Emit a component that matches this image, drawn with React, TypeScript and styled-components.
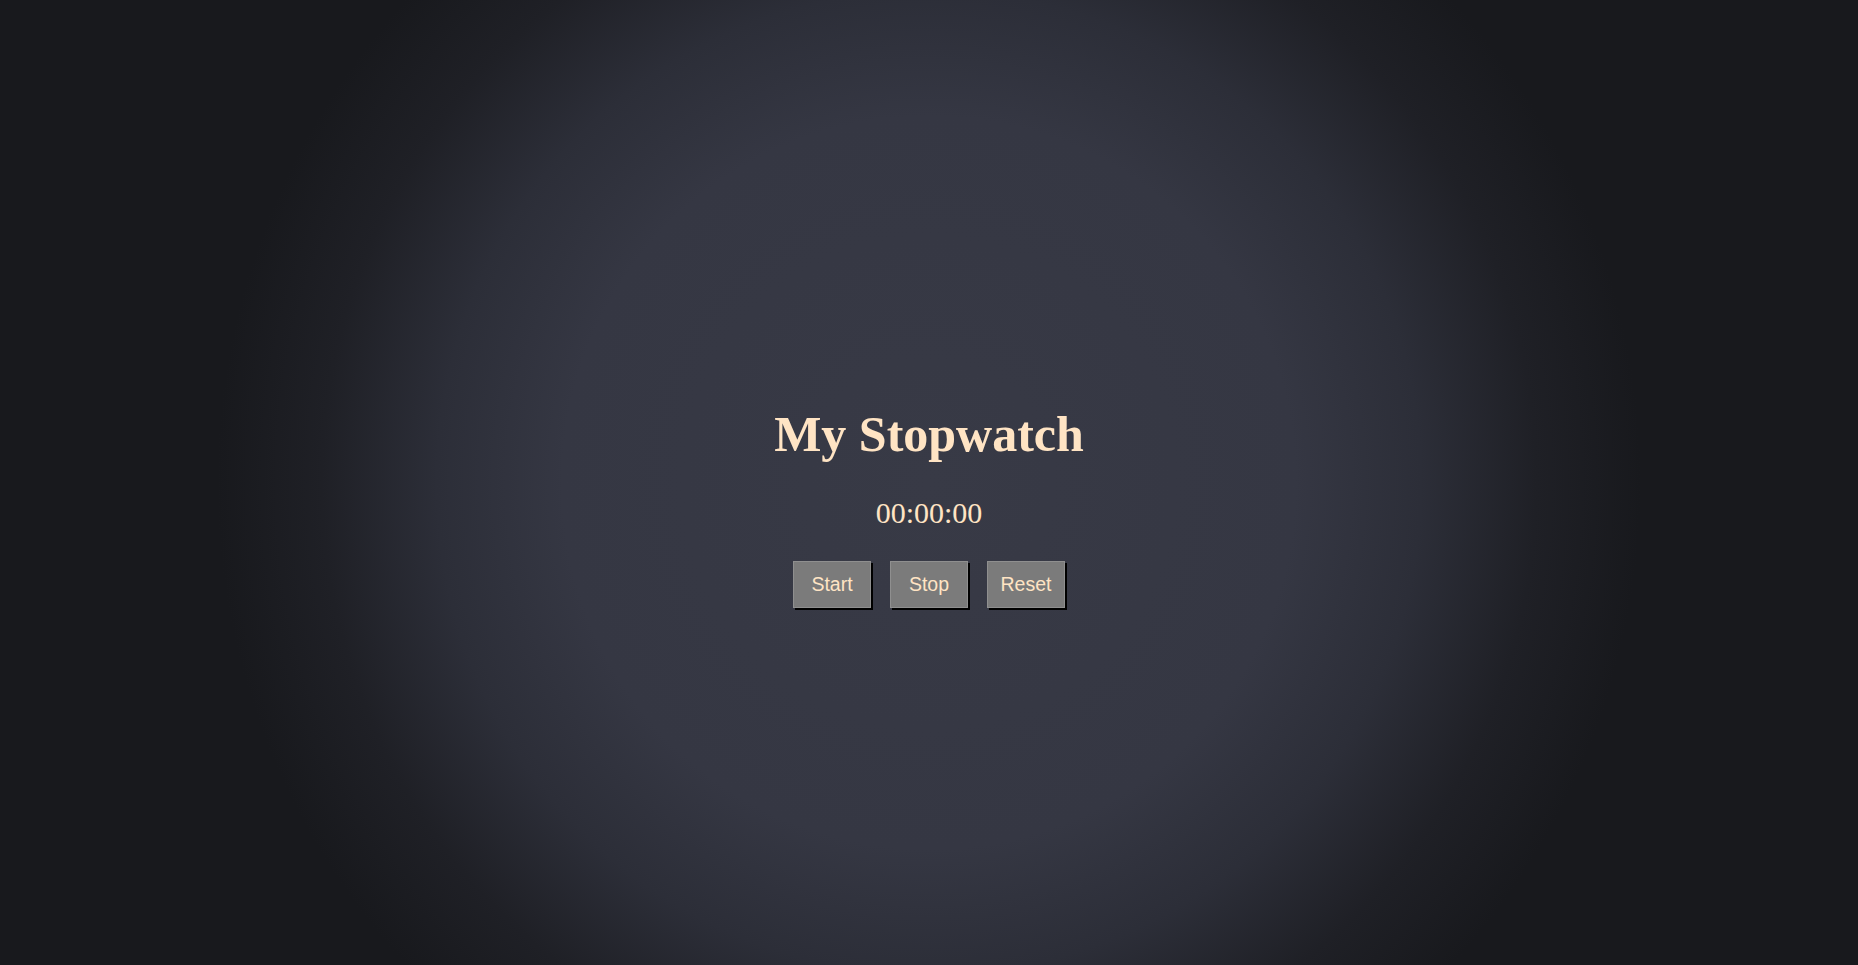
import React, { useEffect, useRef, useState } from "react";
import styled, { createGlobalStyle } from "styled-components";

const GlobalStyle = createGlobalStyle`
  html, body {
    margin: 0;
    padding: 0;
    height: 100%;
  }
  body {
    background: #18191d;
    font-family: "Liberation Serif", "Times New Roman", serif;
  }
`;

const Page = styled.main`
  box-sizing: border-box;
  min-height: 100vh;
  padding-top: 14px;
  display: flex;
  flex-direction: column;
  align-items: center;
  justify-content: center;
  background: radial-gradient(
    circle at 50% 50%,
    #383a46 0%,
    #353743 35%,
    #2c2e38 47%,
    #1f2026 58%,
    #18191d 68%
  );
`;

const Title = styled.h1`
  margin: 33.5px 0;
  font-family: "Liberation Serif", "Times New Roman", serif;
  font-size: 50px;
  font-weight: 700;
  color: #ffe4c4;
`;

const Readout = styled.div`
  margin: 0 0 30.5px;
  font-family: "Liberation Serif", "Times New Roman", serif;
  font-size: 30px;
  color: #ffe4c4;
`;

const Controls = styled.div`
  display: flex;
  gap: 19px;
`;

const ControlButton = styled.button`
  box-sizing: border-box;
  width: 78px;
  height: 47px;
  padding: 0;
  border: 1px solid #8f8f8f;
  background: #7b7b7b;
  color: #ffe4c4;
  font-family: "Liberation Sans", Arial, sans-serif;
  font-size: 19.5px;
  box-shadow: 2px 2px 0 #000;
  cursor: pointer;
`;

const pad = (n: number) => String(n).padStart(2, "0");

function format(ms: number) {
  const total = Math.floor(ms / 1000);
  const h = Math.floor(total / 3600);
  const m = Math.floor((total % 3600) / 60);
  const s = total % 60;
  return `${pad(h)}:${pad(m)}:${pad(s)}`;
}

export default function App() {
  const [elapsed, setElapsed] = useState(0);
  const [running, setRunning] = useState(false);
  const startRef = useRef(0);

  useEffect(() => {
    if (!running) return;
    startRef.current = Date.now() - elapsed;
    const id = setInterval(() => setElapsed(Date.now() - startRef.current), 200);
    return () => clearInterval(id);
    // eslint-disable-next-line react-hooks/exhaustive-deps
  }, [running]);

  return (
    <>
      <GlobalStyle />
      <Page>
        <Title>My Stopwatch</Title>
        <Readout>{format(elapsed)}</Readout>
        <Controls>
          <ControlButton onClick={() => setRunning(true)}>Start</ControlButton>
          <ControlButton onClick={() => setRunning(false)}>Stop</ControlButton>
          <ControlButton
            onClick={() => {
              setRunning(false);
              setElapsed(0);
            }}
          >
            Reset
          </ControlButton>
        </Controls>
      </Page>
    </>
  );
}
